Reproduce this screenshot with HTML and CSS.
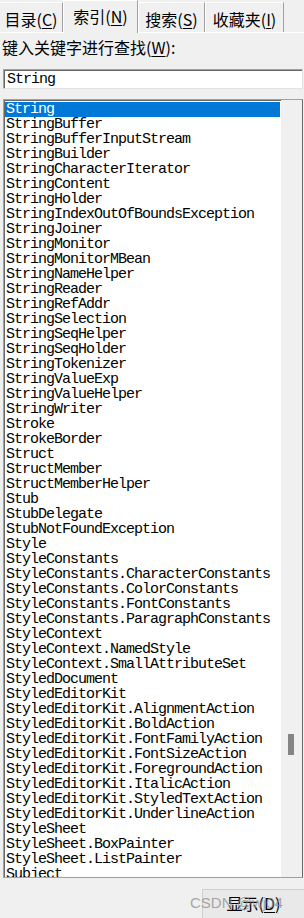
FILE: index.html
```html
<!DOCTYPE html>
<html lang="zh-CN">
<head>
  <meta charset="UTF-8">
  <title>索引</title>
  <link rel="stylesheet" href="styles.css">
</head>
<body>

<!-- tab strip -->
<div class="tabs">
  <div class="tab tab-toc">目录(<u>C</u>)</div>
  <div class="tab tab-index active">索引(<u>N</u>)</div>
  <div class="tab tab-search">搜索(<u>S</u>)</div>
  <div class="tab tab-fav">收藏夹(<u>I</u>)</div>
</div>

<div class="label">键入关键字进行查找(<u>W</u>):</div>
<div class="search-box">String</div>

<!-- keyword list -->
<div class="list">
  <div class="items" id="items"></div>
  <div class="scrollbar"><div class="thumb"></div></div>
</div>

<div class="footer">
  <div class="btn">显示(<u>D</u>)</div>
</div>
<div class="watermark">CSDN @wj04</div>

<script>
  const words = [
    "String", "StringBuffer", "StringBufferInputStream", "StringBuilder",
    "StringCharacterIterator", "StringContent", "StringHolder",
    "StringIndexOutOfBoundsException", "StringJoiner", "StringMonitor",
    "StringMonitorMBean", "StringNameHelper", "StringReader", "StringRefAddr",
    "StringSelection", "StringSeqHelper", "StringSeqHolder", "StringTokenizer",
    "StringValueExp", "StringValueHelper", "StringWriter", "Stroke",
    "StrokeBorder", "Struct", "StructMember", "StructMemberHelper", "Stub",
    "StubDelegate", "StubNotFoundException", "Style", "StyleConstants",
    "StyleConstants.CharacterConstants", "StyleConstants.ColorConstants",
    "StyleConstants.FontConstants", "StyleConstants.ParagraphConstants",
    "StyleContext", "StyleContext.NamedStyle", "StyleContext.SmallAttributeSet",
    "StyledDocument", "StyledEditorKit", "StyledEditorKit.AlignmentAction",
    "StyledEditorKit.BoldAction", "StyledEditorKit.FontFamilyAction",
    "StyledEditorKit.FontSizeAction", "StyledEditorKit.ForegroundAction",
    "StyledEditorKit.ItalicAction", "StyledEditorKit.StyledTextAction",
    "StyledEditorKit.UnderlineAction", "StyleSheet", "StyleSheet.BoxPainter",
    "StyleSheet.ListPainter", "Subject"
  ];
  const list = document.getElementById('items');
  words.forEach((w, i) => {
    const row = document.createElement('div');
    row.className = i === 0 ? 'row selected' : 'row';
    row.textContent = w;
    list.appendChild(row);
  });
</script>

</body>
</html>
```

FILE: styles.css
```css
body { margin: 0; background: #f0f0f0; color: #000; font-family: "Noto Sans CJK SC", "Liberation Sans", sans-serif; font-size: 16px; height: 918px; overflow: hidden; position: relative; }
u { text-decoration-thickness: 1px; text-underline-offset: 2px; }

.tabs { display: flex; align-items: flex-end; height: 32px; border-bottom: 1px solid #fff; }
.tab { flex: none; box-sizing: border-box; height: 30px; line-height: 32px; text-align: center; border: 1px solid #fff; border-bottom: none; border-right-color: #a0a0a0; white-space: nowrap; }
.tab.active { height: 33px; margin-bottom: -1px; line-height: 31px; background: #f0f0f0; }
.tab-toc { width: 63px; border-left: none; }
.tab-index { width: 75px; }
.tab-search { width: 67px; }
.tab-fav { width: 79px; }

.label { margin: 4px 0 0 2px; line-height: 20px; }
.search-box { box-sizing: border-box; margin: 12px 0 0 3px; width: 300px; height: 20px; padding: 1px 0 0 3px; background: #fff; border: 1px solid #a0a0a0; border-right-color: #e3e3e3; border-bottom-color: #e3e3e3; box-shadow: inset 1px 1px #696969; font-family: "Liberation Mono", monospace; font-size: 15px; letter-spacing: -1px; line-height: 18px; }

.list { box-sizing: border-box; display: flex; margin: 10px 0 0 3px; width: 300px; height: 779px; background: #fff; border: 1px solid #a0a0a0; border-right-color: #696969; box-shadow: inset 1px 1px #696969; }
.items { flex: 1; overflow: hidden; padding: 2px 1px 0 1px; font-family: "Liberation Mono", monospace; font-size: 15px; letter-spacing: -1px; }
.row { height: 15px; line-height: 15px; padding-left: 1px; white-space: nowrap; }
.row.selected { background: #0078d7; color: #fff; }
.scrollbar { flex: none; width: 21px; background: #f0f0f0; }
.thumb { width: 6px; height: 21px; margin: 634px 0 0 7px; background: #858585; }

.footer { display: flex; justify-content: flex-end; margin-top: 11px; }
.btn { box-sizing: border-box; width: 102px; height: 32px; line-height: 27px; text-align: center; background: #e9e9e9; border: 1px solid #cfcfcf; border-right: none; }
.watermark { position: absolute; left: 190px; top: 891px; color: rgba(140, 140, 140, 0.75); font-family: "Liberation Sans", sans-serif; font-size: 15px; line-height: 24px; white-space: nowrap; pointer-events: none; }
```
